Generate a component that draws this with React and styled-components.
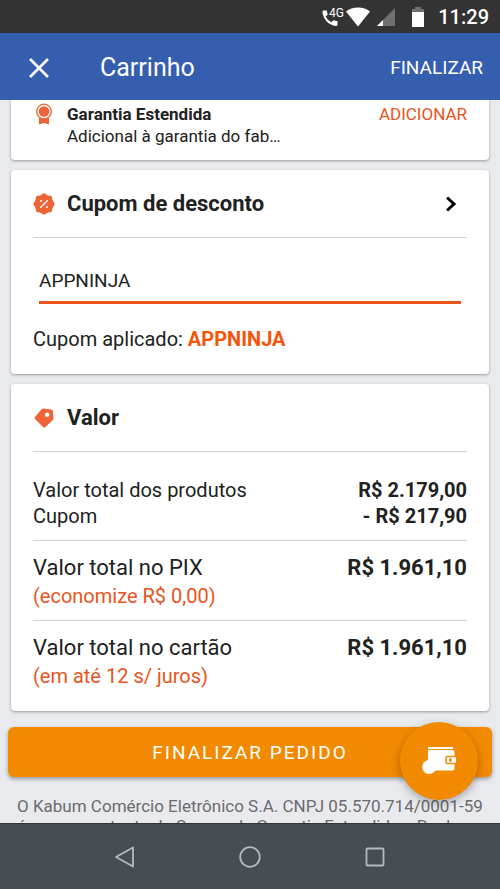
// src/App.jsx
import React, { useState } from 'react';
import styled, { createGlobalStyle } from 'styled-components';

const GlobalStyle = createGlobalStyle`
  * {
    box-sizing: border-box;
  }

  body {
    margin: 0;
    font-family: Roboto, sans-serif;
    color: #212121;
    background: #e9eaee;
  }

  button {
    border: 0;
    padding: 0;
    background: none;
    font-family: inherit;
    cursor: pointer;
  }

  svg {
    display: block;
    flex-shrink: 0;
  }
`;

const Screen = styled.div`
  display: flex;
  flex-direction: column;
  height: 100vh;
  overflow: hidden;
`;

const StatusBar = styled.div`
  display: flex;
  align-items: center;
  justify-content: flex-end;
  flex-shrink: 0;
  height: 33px;
  padding-right: 11px;
  background: #333333;
  color: #fff;
`;

const StatusIcons = styled.div`
  display: flex;
  align-items: center;
  margin-right: 14px;
`;

const StatusIcon = styled.span`
  margin-left: ${(props) => props.$gap}px;
`;

const Clock = styled.span`
  font-size: 20px;
  font-weight: 500;
`;

const Header = styled.header`
  display: flex;
  align-items: center;
  flex-shrink: 0;
  height: 67px;
  padding: 2px 17px 0 29px;
  background: #355eae;
  color: #fff;
`;

const HeaderTitle = styled.h1`
  flex: 1;
  margin: 0 0 0 51px;
  font-size: 25px;
  font-weight: 400;
  line-height: 32px;
`;

const HeaderButton = styled.button`
  color: #fff;
  font-size: 19px;
`;

const Body = styled.div`
  position: relative;
  flex: 1;
  min-height: 0;
`;

const Content = styled.main`
  height: 100%;
  overflow: hidden;
`;

const Card = styled.section`
  margin: 0 11px 10px;
  padding: 0 22px;
  border-radius: ${(props) => (props.$cut ? '0 0 4px 4px' : '4px')};
  background: #fff;
  box-shadow: 0 1px 3px rgba(0, 0, 0, 0.35);
`;

const Warranty = styled.div`
  display: flex;
  align-items: flex-start;
  padding: 3px 0 13px;
`;

const WarrantyText = styled.div`
  flex: 1;
  margin-left: 12px;
  font-size: 17px;
  line-height: 22px;
`;

const AddButton = styled.button`
  color: #e8541a;
  font-size: 17px;
  line-height: 22px;
`;

const CardHeader = styled.div`
  display: flex;
  align-items: center;
  height: 68px;
  border-bottom: 1px solid #d0d2d5;
`;

const CardTitle = styled.h2`
  flex: 1;
  margin: 0 0 0 12px;
  font-size: 22px;
  font-weight: 700;
`;

const IconButton = styled.button`
  display: flex;
  margin-right: 10px;
`;

const CouponInput = styled.input`
  display: block;
  width: calc(100% - 12px);
  height: 45px;
  margin: 21px 6px 0;
  padding: 0;
  border: 0;
  border-bottom: 3px solid #e8541a;
  border-radius: 0;
  outline: none;
  background: none;
  color: #212121;
  font-family: inherit;
  font-size: 19px;
`;

const CouponStatus = styled.p`
  margin: 0;
  padding: 22px 0;
  font-size: 20px;
  line-height: 26px;

  strong {
    color: #f4550b;
  }
`;

const PriceGroup = styled.dl`
  margin: 0;
  padding: ${(props) => (props.$first ? '25px 0 11px' : '13px 0 10px')};

  & + & {
    border-top: 1px solid #d0d2d5;
  }

  &:last-child {
    padding-bottom: 21px;
  }
`;

const PriceRow = styled.div`
  display: flex;
  justify-content: space-between;
  font-size: ${(props) => (props.$total ? 22 : 20)}px;
  line-height: ${(props) => (props.$total ? 28 : 26)}px;

  dd {
    margin: 0;
    font-weight: 700;
  }
`;

const Note = styled.dd`
  margin: 0;
  color: #e8541a;
  font-size: 20px;
  line-height: 28px;
`;

const CheckoutButton = styled.button`
  display: block;
  width: calc(100% - 16px);
  height: 50px;
  margin: 16px 8px 0;
  border-radius: 6px;
  background: #f28a00;
  box-shadow: 0 2px 4px rgba(0, 0, 0, 0.35);
  color: #fff;
  font-size: 19px;
  letter-spacing: 2px;
`;

const Legal = styled.p`
  margin: 19px 17px 0;
  color: #6a6b6e;
  font-size: 17px;
  line-height: 20px;
`;

const WalletButton = styled.button`
  position: absolute;
  right: 22px;
  bottom: 23px;
  display: flex;
  align-items: center;
  justify-content: center;
  width: 78px;
  height: 78px;
  border-radius: 50%;
  background: #f28a00;
  box-shadow: 0 3px 8px rgba(0, 0, 0, 0.3);
`;

const NavBar = styled.nav`
  display: flex;
  align-items: center;
  justify-content: center;
  flex-shrink: 0;
  gap: 101px;
  height: 66px;
  border-top: 1px solid #30353a;
  background: #464d53;
`;

const NavButton = styled.button`
  display: flex;
`;

function CallIcon() {
  return (
    <svg width="22" height="22" viewBox="0 0 22 22">
      <path
        d="M1.5 4.500h3.200l1 4.200-2 1.900c1.300 2.600 3.100 4.400 5.600 5.600l2-2 4.200 1v3.300c0 1-.7 1.500-1.600 1.500C7.200 19.500.7 13 .5 6c0-.9.3-1.500 1-1.500z"
        fill="#fff"
      />
      <text x="7" y="11" fill="#fff" fontSize="12" fontFamily="Roboto, sans-serif">
        4G
      </text>
    </svg>
  );
}

function WifiIcon() {
  return (
    <svg width="24" height="20" viewBox="0 0 24 20">
      <path d="M0 4.500C3.300 1.800 7.400.5 12 .5s8.700 1.300 12 4L12 19.500z" fill="#fff" />
    </svg>
  );
}

function SignalIcon() {
  return (
    <svg width="18" height="18" viewBox="0 0 18 18">
      <path d="M18 0v18H0z" fill="#707070" />
      <path d="M6 12v6H0z" fill="#fff" />
    </svg>
  );
}

function BatteryIcon() {
  return (
    <svg width="12" height="20" viewBox="0 0 12 20">
      <path d="M3 0h6v2h3v4H0V2h3z" fill="#707070" />
      <path d="M0 5h12v15H0z" fill="#fff" />
    </svg>
  );
}

function MedalIcon() {
  return (
    <svg width="22" height="22" viewBox="0 0 22 22">
      <path d="M6 13h10v8.500l-5-1.500-5 1.500z" fill="#ec6437" />
      <circle cx="11" cy="8.500" r="7.300" fill="#fff" stroke="#ec6437" strokeWidth="1.300" />
      <circle cx="11" cy="8.500" r="5.200" fill="#ec6437" />
    </svg>
  );
}

function PercentIcon() {
  return (
    <svg width="22" height="22" viewBox="0 0 22 22">
      <g fill="#ec6437">
        <circle cx="11" cy="11" r="9.600" />
        {[0, 45, 90, 135, 180, 225, 270, 315].map((angle) => (
          <circle key={angle} cx="11" cy="2.700" r="2.400" transform={`rotate(${angle} 11 11)`} />
        ))}
      </g>
      <path d="M7.700 14.300l6.600-6.600" stroke="#fff" strokeWidth="1.400" strokeLinecap="round" />
      <circle cx="8" cy="8" r="0.900" fill="#fff" />
      <circle cx="14" cy="14" r="0.900" fill="#fff" />
    </svg>
  );
}

function TagIcon() {
  return (
    <svg width="22" height="22" viewBox="0 0 22 22">
      <path
        d="M10 1.600l8.200.8c.9.100 1.500.7 1.600 1.600l.7 7.500c0 .6-.2 1-.6 1.400l-7.700 7.300c-.6.6-1.300.6-1.900 0L2 12c-.6-.7-.6-1.300 0-1.900l6.600-7.900c.4-.5.9-.7 1.400-.6z"
        fill="#ec6437"
      />
      <circle cx="14.200" cy="7.700" r="2.200" fill="#fff" />
    </svg>
  );
}

function WalletIcon() {
  return (
    <svg width="34" height="30" viewBox="0 0 34 30">
      <path d="M6 1h25v2H6z" fill="#fff" />
      <path d="M6 4h24.500a2 2 0 0 1 2 2v16.500a2 2 0 0 1-2 2H6z" fill="#fff" />
      <circle cx="7.200" cy="21" r="7" fill="#fff" />
      <rect x="24" y="10.500" width="11" height="7" rx="1.500" fill="#fff" stroke="#f28a00" strokeWidth="1.500" />
      <circle cx="28.500" cy="14" r="1.700" fill="#f28a00" />
    </svg>
  );
}

function App() {
  const [coupon, setCoupon] = useState('APPNINJA');

  return (
    <Screen>
      <GlobalStyle />
      <StatusBar>
        <StatusIcons>
          <CallIcon />
          <StatusIcon $gap={2}>
            <WifiIcon />
          </StatusIcon>
          <StatusIcon $gap={7}>
            <SignalIcon />
          </StatusIcon>
          <StatusIcon $gap={17}>
            <BatteryIcon />
          </StatusIcon>
        </StatusIcons>
        <Clock>11:29</Clock>
      </StatusBar>

      <Header>
        <HeaderButton aria-label="Fechar">
          <svg width="20" height="20" viewBox="0 0 20 20">
            <path d="M1 1l18 18m0-18L1 19" stroke="#fff" strokeWidth="2.600" />
          </svg>
        </HeaderButton>
        <HeaderTitle>Carrinho</HeaderTitle>
        <HeaderButton>FINALIZAR</HeaderButton>
      </Header>

      <Body>
        <Content>
          <Card $cut>
            <Warranty>
              <MedalIcon />
              <WarrantyText>
                <strong>Garantia Estendida</strong>
                <div>Adicional à garantia do fab…</div>
              </WarrantyText>
              <AddButton>ADICIONAR</AddButton>
            </Warranty>
          </Card>

          <Card>
            <CardHeader>
              <PercentIcon />
              <CardTitle>
                <label htmlFor="coupon">Cupom de desconto</label>
              </CardTitle>
              <IconButton aria-label="Abrir cupom">
                <svg width="12" height="16" viewBox="0 0 12 16">
                  <path d="M2 1.500L9 8l-7 6.500" fill="none" stroke="#000" strokeWidth="3" />
                </svg>
              </IconButton>
            </CardHeader>
            <CouponInput id="coupon" type="text" value={coupon} onChange={(e) => setCoupon(e.target.value)} />
            <CouponStatus>
              Cupom aplicado: <strong>APPNINJA</strong>
            </CouponStatus>
          </Card>

          <Card>
            <CardHeader>
              <TagIcon />
              <CardTitle>Valor</CardTitle>
            </CardHeader>
            <PriceGroup $first>
              <PriceRow>
                <dt>Valor total dos produtos</dt>
                <dd>R$ 2.179,00</dd>
              </PriceRow>
              <PriceRow>
                <dt>Cupom</dt>
                <dd>- R$ 217,90</dd>
              </PriceRow>
            </PriceGroup>
            <PriceGroup>
              <PriceRow $total>
                <dt>Valor total no PIX</dt>
                <dd>R$ 1.961,10</dd>
              </PriceRow>
              <Note as="div">(economize R$ 0,00)</Note>
            </PriceGroup>
            <PriceGroup>
              <PriceRow $total>
                <dt>Valor total no cartão</dt>
                <dd>R$ 1.961,10</dd>
              </PriceRow>
              <Note as="div">(em até 12 s/ juros)</Note>
            </PriceGroup>
          </Card>

          <CheckoutButton>FINALIZAR PEDIDO</CheckoutButton>
          <Legal>
            O Kabum Comércio Eletrônico S.A. CNPJ 05.570.714/0001-59 é o representante de Seguro de Garantia Estendida e Roubo e
          </Legal>
        </Content>
        <WalletButton aria-label="Carteira">
          <WalletIcon />
        </WalletButton>
      </Body>

      <NavBar>
        <NavButton aria-label="Voltar">
          <svg width="24" height="24" viewBox="0 0 24 24">
            <path d="M20 2.500v19L3 12z" fill="none" stroke="#b5bac0" strokeWidth="1.800" strokeLinejoin="round" />
          </svg>
        </NavButton>
        <NavButton aria-label="Início">
          <svg width="24" height="24" viewBox="0 0 24 24">
            <circle cx="12" cy="12" r="9.800" fill="none" stroke="#b5bac0" strokeWidth="1.800" />
          </svg>
        </NavButton>
        <NavButton aria-label="Recentes">
          <svg width="24" height="24" viewBox="0 0 24 24">
            <rect x="3.500" y="3.500" width="17" height="17" rx="1" fill="none" stroke="#b5bac0" strokeWidth="1.800" />
          </svg>
        </NavButton>
      </NavBar>
    </Screen>
  );
}

export default App;
